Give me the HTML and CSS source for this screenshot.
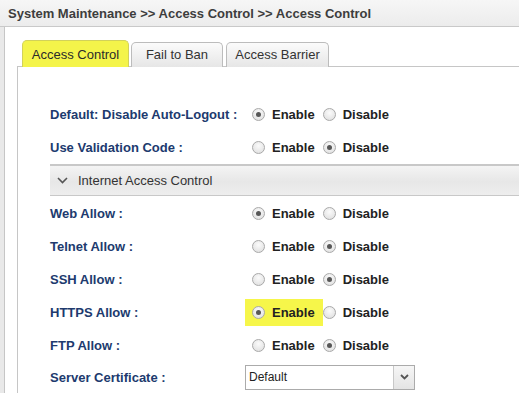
FILE: index.html
```html
<!DOCTYPE html>
<html>
<head>
<meta charset="utf-8">
<link rel="stylesheet" href="styles.css">
</head>
<body>
<div class="header">System Maintenance &gt;&gt; Access Control &gt;&gt; Access Control</div>
<div class="main">
  <div class="tabs">
    <div class="tab active">Access Control</div>
    <div class="tab t2">Fail to Ban</div>
    <div class="tab t3">Access Barrier</div>
  </div>
  <div class="panel">
    <div class="row">
      <div class="label">Default: Disable Auto-Logout :</div>
      <div class="opts"><span class="opt"><span class="radio on"></span>Enable</span><span class="opt"><span class="radio"></span>Disable</span></div>
    </div>
    <div class="row">
      <div class="label">Use Validation Code :</div>
      <div class="opts"><span class="opt"><span class="radio"></span>Enable</span><span class="opt"><span class="radio on"></span>Disable</span></div>
    </div>
    <div class="section">
      <svg class="chev" width="11" height="7" viewBox="0 0 11 7"><path d="M1 1 L5.5 5.5 L10 1" fill="none" stroke="#555" stroke-width="1.6"/></svg>
      <span>Internet Access Control</span>
    </div>
    <div class="row first">
      <div class="label">Web Allow :</div>
      <div class="opts"><span class="opt"><span class="radio on"></span>Enable</span><span class="opt"><span class="radio"></span>Disable</span></div>
    </div>
    <div class="row">
      <div class="label">Telnet Allow :</div>
      <div class="opts"><span class="opt"><span class="radio"></span>Enable</span><span class="opt"><span class="radio on"></span>Disable</span></div>
    </div>
    <div class="row">
      <div class="label">SSH Allow :</div>
      <div class="opts"><span class="opt"><span class="radio"></span>Enable</span><span class="opt"><span class="radio on"></span>Disable</span></div>
    </div>
    <div class="row">
      <div class="label">HTTPS Allow :</div>
      <div class="opts"><span class="opt hl"><span class="radio on"></span>Enable</span><span class="opt"><span class="radio"></span>Disable</span></div>
    </div>
    <div class="row short">
      <div class="label">FTP Allow :</div>
      <div class="opts"><span class="opt"><span class="radio"></span>Enable</span><span class="opt"><span class="radio on"></span>Disable</span></div>
    </div>
    <div class="row short">
      <div class="label">Server Certificate :</div>
      <div class="select"><span class="sel-text">Default</span><span class="sel-btn"><svg width="9" height="6" viewBox="0 0 9 6"><path d="M1 1 L4.5 4.5 L8 1" fill="none" stroke="#555" stroke-width="1.8"/></svg></span></div>
    </div>
  </div>
</div>
</body>
</html>
```
FILE: styles.css
```css
html, body {
  margin: 0;
  padding: 0;
  height: 100%;
  overflow: hidden;
}
body {
  background: #e9e9e9;
  font-family: "Liberation Sans", Arial, sans-serif;
}
.header {
  height: 26px;
  line-height: 27px;
  border-bottom: 1px solid #c9c9c9;
  background: linear-gradient(#f6f6f6, #ececec);
  padding-left: 8px;
  font-size: 13px;
  font-weight: bold;
  color: #3d3d3d;
  white-space: nowrap;
}
.main {
  margin-left: 4px;
  border-left: 1px solid #c6c6c6;
  background: #fff;
  height: 400px;
  padding: 13px 0 0 12px;
}
.tabs {
  display: flex;
  align-items: flex-end;
  height: 27px;
  padding-left: 5px;
  margin-bottom: -1px;
  position: relative;
  z-index: 1;
}
.tab {
  box-sizing: border-box;
  height: 25px;
  line-height: 24px;
  text-align: center;
  font-size: 13px;
  color: #333;
  border: 1px solid #bcbcbc;
  border-bottom: none;
  border-radius: 5px 5px 0 0;
  background: linear-gradient(#fbfbfb, #e6e6e6);
  margin-right: 3px;
}
.tab.active {
  width: 107px;
  height: 27px;
  line-height: 27px;
  background: #f4f44a;
  border-color: #d2d25a;
  color: #2a2a2a;
  margin-right: 2px;
}
.tab.t2 { width: 92px; }
.tab.t3 { width: 103px; }
.panel {
  border-top: 1px solid #c6c6c6;
  border-left: 1px solid #c6c6c6;
  padding: 31px 0 0 32px;
}
.row {
  display: flex;
  align-items: center;
  height: 33px;
}
.row.first { margin-top: 1px; }
.row.short { height: 32px; }
.label {
  width: 195px;
  font-size: 13px;
  font-weight: bold;
  color: #203a6e;
  white-space: nowrap;
}
.opts {
  display: flex;
  align-items: center;
  font-size: 13px;
  font-weight: bold;
  color: #222;
}
.opt {
  display: flex;
  align-items: center;
  height: 27px;
  padding: 0 8px 0 7px;
}
.opt + .opt { padding-left: 0; }
.opt.hl { background: #f6f64a; }
.radio {
  box-sizing: border-box;
  width: 13px;
  height: 13px;
  border-radius: 50%;
  border: 1px solid #a9a9a9;
  background: radial-gradient(circle at 50% 35%, #fbfbfb, #dcdcdc);
  margin-right: 7px;
  position: relative;
}
.radio.on::after {
  content: "";
  position: absolute;
  left: 3px;
  top: 3px;
  width: 5px;
  height: 5px;
  border-radius: 50%;
  background: #575757;
}
.section {
  display: flex;
  align-items: center;
  height: 29px;
  border-top: 2px solid #c8c8c8;
  border-bottom: 1px solid #c8c8c8;
  background: linear-gradient(#f4f4f4, #e7e7e7 55%, #eeeeee);
  font-size: 13px;
  color: #333;
}
.chev {
  margin: 0 10px 0 7px;
}
.select {
  box-sizing: border-box;
  display: flex;
  width: 170px;
  height: 25px;
  border: 1px solid #ababab;
  font-size: 12px;
  color: #222;
}
.sel-text {
  flex: 1;
  line-height: 23px;
  padding-left: 3px;
}
.sel-btn {
  width: 20px;
  border-left: 1px solid #c8c8c8;
  background: linear-gradient(#f6f6f6, #e4e4e4);
  display: flex;
  align-items: center;
  justify-content: center;
}
```
